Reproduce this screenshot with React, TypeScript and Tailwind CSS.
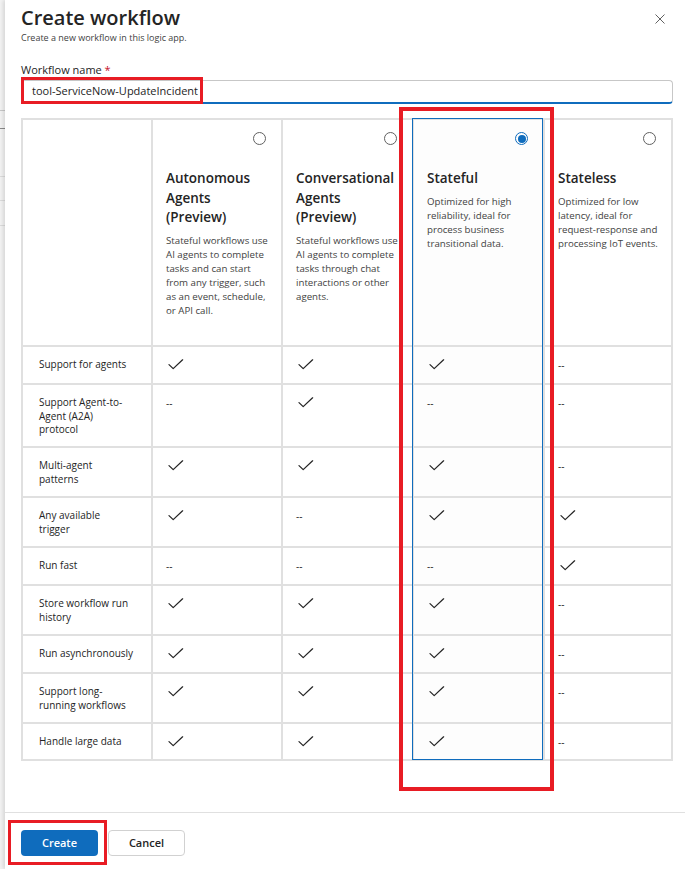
import React from 'react';

type Row = { label: string[]; v: number[] };

const rows: Row[] = [
    { label: ['Support for agents'], v: [1, 1, 1, 0] },
    { label: ['Support Agent-to-', 'Agent (A2A)', 'protocol'], v: [0, 1, 0, 0] },
    { label: ['Multi-agent', 'patterns'], v: [1, 1, 1, 0] },
    { label: ['Any available', 'trigger'], v: [1, 0, 1, 1] },
    { label: ['Run fast'], v: [0, 0, 0, 1] },
    { label: ['Store workflow run', 'history'], v: [1, 1, 1, 0] },
    { label: ['Run asynchronously'], v: [1, 1, 1, 0] },
    { label: ['Support long-', 'running workflows'], v: [1, 1, 1, 0] },
    { label: ['Handle large data'], v: [1, 1, 1, 0] },
];

const options = [
    {
        title: ['Autonomous', 'Agents', '(Preview)'],
        desc: ['Stateful workflows use', 'AI agents to complete', 'tasks and can start', 'from any trigger, such', 'as an event, schedule,', 'or API call.'],
    },
    {
        title: ['Conversational', 'Agents', '(Preview)'],
        desc: ['Stateful workflows use', 'AI agents to complete', 'tasks through chat', 'interactions or other', 'agents.'],
    },
    {
        title: ['Stateful'],
        desc: ['Optimized for high', 'reliability, ideal for', 'process business', 'transitional data.'],
    },
    {
        title: ['Stateless'],
        desc: ['Optimized for low', 'latency, ideal for', 'request-response and', 'processing IoT events.'],
    },
];

function Check() {
    return (
        <svg width="16" height="11" viewBox="0 0 16 11" fill="none" className="ml-[2px] mt-[1px]">
            <path d="M1 5.6 L5.2 9.6 L14.6 0.8" stroke="#242424" strokeWidth="1.25" strokeLinecap="round" strokeLinejoin="round" />
        </svg>
    );
}

function Radio({ checked }: { checked?: boolean }) {
    return checked ? (
        <div className="w-[13px] h-[13px] rounded-full border border-[#0f6cbd] flex items-center justify-center">
            <div className="w-[8px] h-[8px] rounded-full bg-[#0f6cbd]" />
        </div>
    ) : (
        <div className="w-[13px] h-[13px] rounded-full border border-[#616161] bg-white" />
    );
}

export default function App() {
    return (
        <div className="relative w-[685px] h-[869px] overflow-hidden flex bg-white text-[#242424] font-['Open_Sans','Noto_Sans',sans-serif]">
            {/* fondo detras del panel */}
            <div className="w-[5px] shrink-0 bg-[#f3f3f3] flex flex-col">
                <div className="h-[111px] border-b border-[#c8c8c8]" />
                <div className="h-[18px] border-b border-[#8a8a8a]" />
                <div className="h-[48px] border-b border-[#dcdcdc]" />
                <div className="h-[24px] border-b border-[#dcdcdc]" />
                <div className="h-[25px] border-b border-[#dcdcdc]" />
            </div>

            {/* panel */}
            <div className="flex-1 flex flex-col shadow-[-2px_0_4px_rgba(0,0,0,0.12)]">
                <div className="flex-1 pl-4 pr-3">
                    <div className="flex items-start justify-between mt-[4px]">
                        <h1 className="text-[20px] leading-[28px] font-semibold">Create workflow</h1>
                        <svg width="10" height="10" viewBox="0 0 10 10" className="mt-[10px] mr-[8px]">
                            <path d="M0.5 0.5 L9.5 9.5 M9.5 0.5 L0.5 9.5" stroke="#616161" strokeWidth="1" />
                        </svg>
                    </div>
                    <p className="text-[9px] leading-[12px] text-[#424242]">Create a new workflow in this logic app.</p>

                    <label className="block mt-[18px] text-[11px] leading-[16px]">
                        Workflow name <span className="text-[#c50f1f]">*</span>
                    </label>
                    <div className="mt-[2px] w-[652px] h-[24px] rounded-[4px] border border-[#c7c7c7] border-b-2 border-b-[#0f6cbd] flex items-center pl-[10px] text-[11px]">
                        tool-ServiceNow-UpdateIncident
                    </div>

                    {/* tabla comparativa */}
                    <div className="relative mt-[14px] w-[652px]">
                        <div className="grid grid-cols-[128px_128px_129px_129px_126px] grid-rows-[225px_36px_61px_48px_48px_36px_48px_36px_48px_35px] gap-[2px] p-[2px] bg-[#e0e0e0]">
                            <div className="bg-white" />
                            {options.map((o, i) => (
                                <div key={i} className={`${i === 2 ? 'bg-[#fdfdfd]' : 'bg-white'} flex flex-col pt-3 pl-[13px] pr-[15px]`}>
                                    <div className="self-end">
                                        <Radio checked={i === 2} />
                                    </div>
                                    <div className="mt-[24px] text-[13.5px] leading-[19.5px] font-semibold">
                                        {o.title.map((t) => (
                                            <div key={t} className="whitespace-nowrap">{t}</div>
                                        ))}
                                    </div>
                                    <div className="mt-[6px] text-[9.7px] leading-[14px] text-[#424242]">
                                        {o.desc.map((t) => (
                                            <div key={t} className="whitespace-nowrap">{t}</div>
                                        ))}
                                    </div>
                                </div>
                            ))}

                            {rows.map((r, ri) => (
                                <React.Fragment key={ri}>
                                    <div className="bg-white pl-4 pt-[11px] text-[10px] leading-[13.5px] text-[#242424]">
                                        {r.label.map((t) => (
                                            <div key={t} className="whitespace-nowrap">{t}</div>
                                        ))}
                                    </div>
                                    {r.v.map((v, ci) => (
                                        <div key={ci} className={`${ci === 2 ? 'bg-[#fdfdfd]' : 'bg-white'} pl-[13px] pt-[11px] text-[10px] leading-[14px]`}>
                                            {v ? <Check /> : <span>--</span>}
                                        </div>
                                    ))}
                                </React.Fragment>
                            ))}
                        </div>
                        {/* borde de la opcion seleccionada */}
                        <div className="absolute left-[391px] top-0 w-[131px] h-[642px] border border-[#0f6cbd] pointer-events-none" />
                    </div>
                </div>

                <div className="h-[57px] shrink-0 border-t border-[#e0e0e0] pl-4 pt-[17px] flex gap-[10px]">
                    <button className="w-[77px] h-[26px] rounded-[4px] bg-[#0f6cbd] text-white text-[11px] font-semibold">Create</button>
                    <button className="w-[77px] h-[26px] rounded-[4px] border border-[#d1d1d1] bg-white text-[11px] font-semibold text-[#242424]">Cancel</button>
                </div>
            </div>

            {/* marcas rojas de anotacion */}
            <div className="absolute left-[21px] top-[77px] w-[182px] h-[27px] border-[3px] border-[#e81c24] pointer-events-none" />
            <div className="absolute left-[399px] top-[107px] w-[155px] h-[684px] border-4 border-[#e81c24] pointer-events-none" />
            <div className="absolute left-[8px] top-[820px] w-[99px] h-[45px] border-[3.5px] border-[#e81c24] pointer-events-none" />
        </div>
    );
}
